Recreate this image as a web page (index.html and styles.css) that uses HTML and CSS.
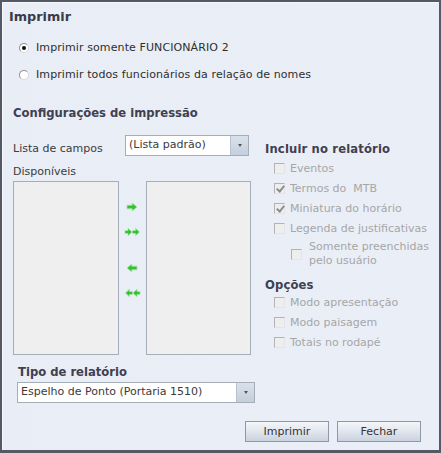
FILE: index.html
```html
<!DOCTYPE html>
<html lang="pt">
<head>
<meta charset="utf-8">
<link rel="stylesheet" href="styles.css">
</head>
<body>
<div class="panel">
  <div class="title">Imprimir</div>
  <div class="radios">
    <label class="radio-row"><span class="radio checked"></span>Imprimir somente FUNCIONÁRIO 2</label>
    <label class="radio-row"><span class="radio"></span>Imprimir todos funcionários da relação de nomes</label>
  </div>
  <div class="section-title">Configurações de impressão</div>
  <div class="config">
    <div class="left">
      <div class="field-row">
        <span class="lbl">Lista de campos</span>
        <div class="select small"><span class="sel-text">(Lista padrão)</span><span class="sel-btn"><span class="tri"></span></span></div>
      </div>
      <div class="lbl disp">Disponíveis</div>
      <div class="lists">
        <div class="listbox"></div>
        <div class="arrows">
          <svg class="arr a1" width="12" height="10" viewBox="0 0 12 10"><path d="M1 3.2h5.2V1l4.8 4-4.8 4V6.8H1z" fill="#33c033" stroke="#a6e4a6" stroke-width="0.8"/></svg>
          <svg class="arr a2" width="17" height="10" viewBox="0 0 17 10"><path d="M1 3.5h3V1.2l4 3.8-4 3.8V6.5H1z" fill="#33c033" stroke="#a6e4a6" stroke-width="0.8"/><path d="M8.5 3.5h3V1.2l4 3.8-4 3.8V6.5h-3z" fill="#33c033" stroke="#a6e4a6" stroke-width="0.8"/></svg>
          <svg class="arr a3" width="12" height="10" viewBox="0 0 12 10"><path d="M11 3.2H5.8V1L1 5l4.8 4V6.8H11z" fill="#33c033" stroke="#a6e4a6" stroke-width="0.8"/></svg>
          <svg class="arr a4" width="17" height="10" viewBox="0 0 17 10"><path d="M8.5 3.5h-3V1.2L1.5 5l4 3.8V6.5h3z" fill="#33c033" stroke="#a6e4a6" stroke-width="0.8"/><path d="M16 3.5h-3V1.2L9 5l4 3.8V6.5h3z" fill="#33c033" stroke="#a6e4a6" stroke-width="0.8"/></svg>
        </div>
        <div class="listbox"></div>
      </div>
    </div>
    <div class="right">
      <div class="group-title first">Incluir no relatório</div>
      <div class="cb-row"><span class="cb"></span>Eventos</div>
      <div class="cb-row"><span class="cb checked"></span>Termos do&nbsp; MTB</div>
      <div class="cb-row"><span class="cb checked"></span>Miniatura do horário</div>
      <div class="cb-row"><span class="cb"></span>Legenda de justificativas</div>
      <div class="cb-row sub"><span class="cb"></span><span class="multi">Somente preenchidas<br>pelo usuário</span></div>
      <div class="group-title opt">Opções</div>
      <div class="cb-row"><span class="cb"></span>Modo apresentação</div>
      <div class="cb-row"><span class="cb"></span>Modo paisagem</div>
      <div class="cb-row"><span class="cb"></span>Totais no rodapé</div>
    </div>
  </div>
  <div class="tipo-title">Tipo de relatório</div>
  <div class="select wide"><span class="sel-text">Espelho de Ponto (Portaria 1510)</span><span class="sel-btn"><span class="tri"></span></span></div>
  <div class="buttons">
    <button class="btn">Imprimir</button>
    <button class="btn">Fechar</button>
  </div>
</div>
</body>
</html>
```
FILE: styles.css
```css
* { box-sizing: border-box; }
html, body { margin: 0; padding: 0; background: #e9eef6; }
body { font-family: "DejaVu Sans", Tahoma, sans-serif; font-size: 11px; color: #333; }
.panel {
  width: 441px; height: 453px;
  border: 2px solid #555965;
  border-bottom-width: 3px;
  background: linear-gradient(90deg, #e8edf6 0%, #eaeff7 100%);
  box-shadow: inset 1px 1px 0 #f6f8fb;
  position: relative;
}
.title { font-weight: bold; font-size: 12.8px; color: #3a3a48; margin: 7px 0 0 7px; height: 16px; line-height: 16px; }
.radios { margin: 15px 0 0 17px; display: flex; flex-direction: column; gap: 12px; }
.radio-row { display: flex; align-items: center; height: 15px; font-size: 11px; color: #2e2e2e; letter-spacing: 0.1px; }
.radio {
  width: 10px; height: 10px; border-radius: 50%; border: 1px solid #8f8f8f;
  background: #fff; margin-right: 7px; position: relative; flex: none;
  border-right-color: #d8d8d8; border-bottom-color: #d8d8d8;
}
.radio.checked::after { content: ""; position: absolute; left: 2px; top: 2px; width: 4px; height: 4px; border-radius: 50%; background: #111; }
.section-title, .group-title, .tipo-title { font-weight: bold; font-size: 11.6px; color: #404050; }
.section-title { margin: 24px 0 0 11px; height: 14px; line-height: 14px; }
.group-title { letter-spacing: 0.15px; }
.config { display: flex; margin: 15px 0 0 11px; }
.left { width: 238px; }
.field-row { display: flex; align-items: center; height: 21px; }
.lbl { color: #3c3c3c; }
.field-row .lbl { width: 112px; padding-top: 6px; }
.select { display: flex; border: 1px solid #a5adb8; background: #fff; height: 21px; }
.select .sel-text { flex: 1; padding-left: 3px; line-height: 18px; color: #3a3a3a; }
.select .sel-btn {
  width: 18px; border-left: 1px solid #b9c2cf;
  background: linear-gradient(#d9e1eb, #c4cfdc);
  display: flex; align-items: center; justify-content: center;
}
.tri { width: 0; height: 0; border-left: 2.5px solid transparent; border-right: 2.5px solid transparent; border-top: 3px solid #555; }
.select.small { width: 124px; }
.disp { margin-top: 9px; height: 14px; line-height: 14px; }
.lists { display: flex; margin-top: 2px; }
.listbox { width: 106px; height: 174px; border: 1px solid #a5adb8; background: #efefef; }
.arrows { width: 27px; position: relative; }
.arr { position: absolute; left: 7px; }
.arr.a2, .arr.a4 { left: 5px; }
.a1 { top: 21px; }
.a2 { top: 46px; }
.a3 { top: 82px; }
.a4 { top: 107px; }
.listbox + .arrows + .listbox { width: 105px; }
.right { margin-left: 14px; padding-top: 7px; }
.group-title { height: 14px; line-height: 14px; }
.group-title.first { margin-bottom: 2px; }
.group-title.opt { margin-top: 8px; }
.cb-row { display: flex; align-items: center; height: 20px; color: #a6a6a6; padding-left: 9px; }
.cb {
  width: 11px; height: 11px; border: 1px solid #b3b3b3; background: #eeeeee;
  margin-right: 5px; position: relative; flex: none;
  border-right-color: #e4e4e4; border-bottom-color: #e4e4e4;
}
.cb.checked::after {
  content: ""; position: absolute; left: 2.5px; top: 0px; width: 3px; height: 6px;
  border: solid #8c8c8c; border-width: 0 2px 2px 0; transform: rotate(40deg);
}
.cb-row.sub { padding-left: 26px; height: 32px; align-items: center; }
.cb-row.sub .cb { margin-right: 7px; }
.multi { line-height: 14px; }
.tipo-title { margin: 10px 0 0 16px; height: 14px; line-height: 14px; }
.select.wide { width: 238px; margin: 3px 0 0 15px; }
.buttons { display: flex; justify-content: flex-end; gap: 8px; margin: 18px 18px 0 0; }
.btn {
  width: 84px; height: 21px; font-family: inherit; font-size: 11px; color: #333;
  border: 1px solid #8d98a8; border-radius: 0;
  background: linear-gradient(#f3f5f9 0%, #e3e8ef 45%, #c9d2de 100%);
  padding: 0;
}
```
